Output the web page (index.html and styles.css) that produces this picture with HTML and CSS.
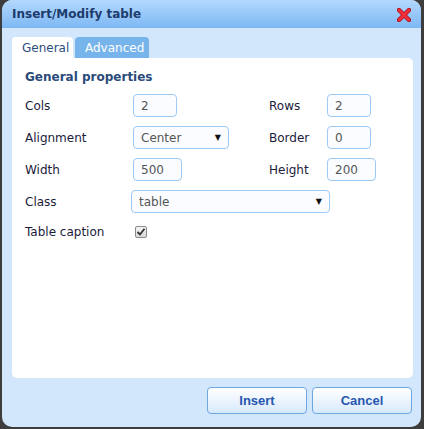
FILE: index.html
```html
<!DOCTYPE html>
<html lang="en">
<head>
  <meta charset="UTF-8" />
  <title>Insert/Modify table</title>
  <link rel="stylesheet" href="styles.css">
</head>
<body>
  <div class="dialog">
    <div class="dialog-header">
      <span class="dialog-title">Insert/Modify table</span>
      <span class="close">
        <svg width="14" height="14" viewBox="0 0 14 14">
          <path d="M2 2 L12 12 M12 2 L2 12" stroke="#b0101a" stroke-width="4.4" stroke-linecap="round"/>
          <path d="M2 2 L12 12 M12 2 L2 12" stroke="#f0303a" stroke-width="2.6" stroke-linecap="round"/>
        </svg>
      </span>
    </div>

    <div class="dialog-body">
      <div class="tabs">
        <div class="tab active">General</div>
        <div class="tab">Advanced</div>
      </div>

      <div class="panel">
        <div class="section-title">General properties</div>

        <div class="form-grid">
          <label>Cols</label>
          <div><span class="field w44">2</span></div>
          <label>Rows</label>
          <div><span class="field w44">2</span></div>

          <label>Alignment</label>
          <div><span class="field select w96">Center<span class="arrow">&#9660;</span></span></div>
          <label>Border</label>
          <div><span class="field w44">0</span></div>

          <label>Width</label>
          <div><span class="field w49">500</span></div>
          <label>Height</label>
          <div><span class="field w49">200</span></div>

          <label>Class</label>
          <div class="span3"><span class="field select w199">table<span class="arrow">&#9660;</span></span></div>

          <label>Table caption</label>
          <div class="span3">
            <span class="checkbox">
              <svg width="10" height="10" viewBox="0 0 10 10">
                <path d="M1.5 5 L4 7.5 L8.5 1.8" fill="none" stroke="#333" stroke-width="1.8"/>
              </svg>
            </span>
          </div>
        </div>
      </div>

      <div class="actions">
        <button>Insert</button>
        <button>Cancel</button>
      </div>
    </div>
  </div>
</body>
</html>
```

FILE: styles.css
```css
body {
  margin: 0;
  background: #3d3d3d;
  font-family: 'DejaVu Sans', Verdana, sans-serif;
  font-size: 11px;
  color: #1b1b3a;
}

.dialog {
  margin-left: 2px;
  width: 419px;
  height: 427px;
  border-radius: 10px;
  background: #d3e7fc;
  overflow: hidden;
  display: flex;
  flex-direction: column;
}

.dialog-header {
  height: 28px;
  background: linear-gradient(#b3d8fd, #7db8f4);
  display: flex;
  align-items: center;
  justify-content: space-between;
  padding: 0 10px 0 10px;
}

.dialog-title {
  font-family: 'DejaVu Sans', Verdana, sans-serif;
  font-weight: bold;
  font-size: 12px;
  color: #1d3b6c;
}

.close {
  display: flex;
  margin-top: 1px;
}

.dialog-body {
  flex: 1;
  padding: 9px 8px 0 10px;
  display: flex;
  flex-direction: column;
}

.tabs {
  display: flex;
  gap: 2px;
  height: 21px;
}

.tab {
  padding: 0 10px;
  line-height: 22px;
  font-size: 12px;
  border-radius: 4px 4px 0 0;
  background: #78b4ec;
  color: #fff;
  width: 54px;
}

.tab.active {
  background: #fff;
  color: #2d4d7c;
  width: 41px;
}

.panel {
  box-sizing: border-box;
  height: 320px;
  background: #fff;
  border-radius: 0 5px 5px 5px;
  padding: 12px 13px 0 13px;
}

.section-title {
  font-weight: bold;
  font-size: 12px;
  color: #2a4a7a;
  height: 24px;
}

.form-grid {
  display: grid;
  grid-template-columns: 108px 136px 58px auto;
  grid-template-rows: 23px 23px 23px 23px 20px;
  row-gap: 9px;
  align-items: center;
}

.form-grid label {
  font-size: 12px;
  color: #1b1b3a;
}

.span3 {
  grid-column: span 3;
}

.field {
  display: flex;
  align-items: center;
  box-sizing: border-box;
  height: 23px;
  border: 1px solid #9dcaf4;
  border-radius: 4px;
  background: #fafcff;
  padding: 0 7px;
  font-size: 12px;
  color: #555;
}

.w44 { width: 44px; }
.w49 { width: 49px; }
.w96 { width: 96px; }
.w199 { width: 199px; margin-left: -2px; }

.select {
  justify-content: space-between;
}

.arrow {
  font-size: 8px;
  color: #111;
}

.checkbox {
  display: flex;
  align-items: center;
  justify-content: center;
  margin-left: 2px;
  width: 12px;
  height: 12px;
  box-sizing: border-box;
  border: 1px solid #8a8a8a;
  border-radius: 2px;
  background: linear-gradient(#f4f4f4, #d8d8d8);
}

.actions {
  display: flex;
  justify-content: flex-end;
  gap: 5px;
  margin-top: 9px;
  padding-right: 1px;
}

button {
  width: 100px;
  height: 27px;
  border: 1px solid #6da7e2;
  border-radius: 4px;
  background: linear-gradient(#ffffff, #d7e9fc);
  font-family: 'Liberation Sans', Arial, sans-serif;
  font-weight: bold;
  font-size: 13px;
  color: #2857b0;
}
```
